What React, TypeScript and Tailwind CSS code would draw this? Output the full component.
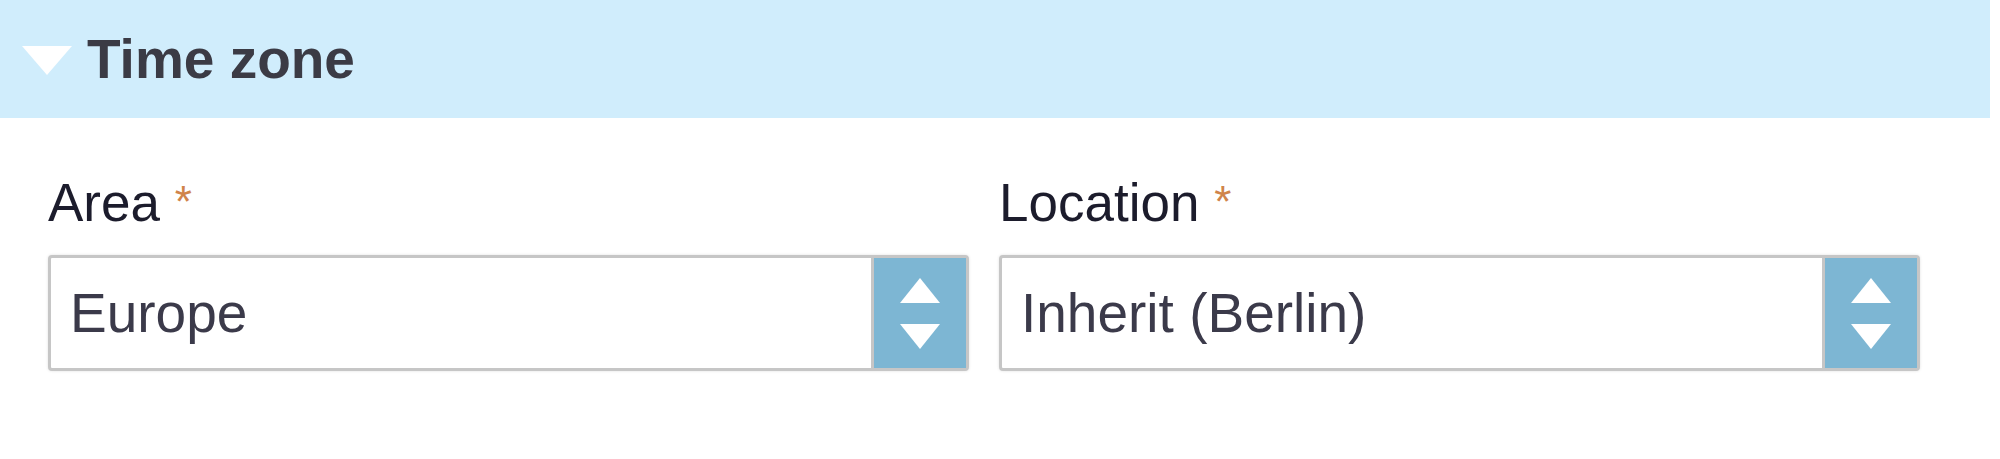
import { ReactNode } from 'react';

function SpinnerSelect({ value }: { value: string }) {
  return (
    <div className="flex h-[116px] rounded-[4px] border-[3px] border-[#c6c6c6] bg-white shadow-[0_0_3px_rgba(0,0,0,0.12)]">
      <div className="flex flex-1 items-center pl-[19px] text-[55px] leading-[64px] text-[#3b3a4a]">
        {value}
      </div>
      <div className="flex w-[95px] flex-col items-center justify-center gap-[21px] border-l-[3px] border-[#c6c6c6] bg-[#7db6d3]">
        <svg width="40" height="25" viewBox="0 0 40 25">
          <polygon points="20,0 40,25 0,25" fill="#ffffff" />
        </svg>
        <svg width="40" height="25" viewBox="0 0 40 25">
          <polygon points="0,0 40,0 20,25" fill="#ffffff" />
        </svg>
      </div>
    </div>
  );
}

function Field({ label, children }: { label: string; children: ReactNode }) {
  return (
    <div className="flex flex-col">
      <label className="h-[64px] text-[53px] leading-[64px] text-[#1c1c2c]">
        {label} <span className="relative -top-[4px] text-[44px] leading-none text-[#d0844a]">*</span>
      </label>
      <div className="mt-[20px]">{children}</div>
    </div>
  );
}

export default function App() {
  return (
    <div className="h-[459px] w-[2000px] bg-white font-['Liberation_Sans',Arial,sans-serif]">
      <div className="flex h-[118px] w-[1990px] items-center bg-[#d0edfc]">
        <svg className="ml-[22px] mt-[2px]" width="50" height="29" viewBox="0 0 50 29">
          <polygon points="0,0 50,0 25,29" fill="#ffffff" />
        </svg>
        <h2 className="ml-[15px] text-[55px] font-bold leading-none text-[#3b3b45]">Time zone</h2>
      </div>

      <div className="grid w-[1920px] grid-cols-2 gap-[30px] pl-[48px] pt-[53px]">
        <Field label="Area">
          <SpinnerSelect value="Europe" />
        </Field>
        <Field label="Location">
          <SpinnerSelect value="Inherit (Berlin)" />
        </Field>
      </div>
    </div>
  );
}
